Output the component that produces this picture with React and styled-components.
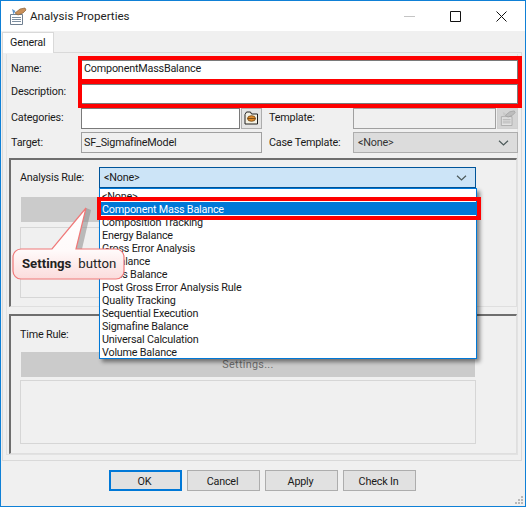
import React from 'react';
import styled, { createGlobalStyle } from 'styled-components';

const GlobalStyle = createGlobalStyle`
  html, body {
    margin: 0;
    padding: 0;
    background: #f0f0f0;
  }
  * {
    box-sizing: border-box;
  }
`;

const Window = styled.div`
  position: relative;
  width: 526px;
  height: 507px;
  overflow: hidden;
  border: 1px solid #0f80d6;
  background: #f0f0f0;
  color: #1a1a1a;
  font-family: Roboto, 'Liberation Sans', sans-serif;
  font-size: 10.8px;
  letter-spacing: -0.2px;
  line-height: 13px;
`;

const TitleBar = styled.div`
  display: flex;
  align-items: center;
  height: 30px;
  padding-left: 8px;
  background: #fff;
`;

const Title = styled.span`
  margin-left: 3px;
  font-size: 11.6px;
  letter-spacing: 0;
  color: #222;
`;

const WindowButtons = styled.div`
  display: flex;
  align-items: center;
  gap: 35px;
  margin-left: auto;
  padding-right: 18px;
`;

const TabStrip = styled.div`
  display: flex;
  height: 21px;
  padding: 1px 0 0 1px;
`;

const Tab = styled.div`
  position: relative;
  z-index: 1;
  width: 52px;
  height: 21px;
  padding: 3px 0 0 7px;
  background: #fff;
  border: 1px solid #d9d9d9;
  border-bottom: none;
`;

const Page = styled.div`
  height: 409px;
  margin: 0 3px 0 1px;
  padding: 1px 3px 5px 3px;
  border: 1px solid #d9d9d9;
`;

const Panel = styled.div`
  height: 100%;
  padding: 6px 0 0 4px;
  border: 1px solid #e2e2e2;
  border-top: none;
`;

const FormGrid = styled.div`
  display: grid;
  grid-template-columns: 70px 181px 7px 84px 165px;
  grid-template-rows: 20px 20px 20px 21px;
  row-gap: 4px;
  align-items: center;
`;

const Label = styled.label`
  grid-column: ${p => p.$col || 'auto'};
  margin-bottom: ${p => p.$lift || 0}px;
`;

const Input = styled.div`
  grid-column: ${p => p.$span || 'auto'};
  height: ${p => p.$height || 21}px;
  padding: ${p => p.$pad ?? 3}px 0 0 2px;
  border: 1px solid ${p => (p.$disabled ? '#a0a0a0' : '#7a7a7a')};
  background: ${p => (p.$disabled ? '#f0f0f0' : '#fff')};
`;

const InputWithButton = styled.div`
  display: grid;
  grid-column: ${p => p.$col || 'auto'};
  grid-template-columns: 1fr 21px;
  column-gap: 1px;
`;

const IconButton = styled.div`
  display: flex;
  align-items: center;
  justify-content: center;
  height: 21px;
  border: 1px solid ${p => (p.$disabled ? '#cfcfcf' : '#adadad')};
  background: ${p => (p.$disabled ? '#d4d4d4' : '#e4e4e4')};
`;

const DisabledSelect = styled.div`
  display: flex;
  align-items: center;
  justify-content: space-between;
  grid-column: ${p => p.$col || 'auto'};
  height: 21px;
  padding: 0 8px 0 4px;
  border: 1px solid #adadad;
  background: #dcdcdc;
  color: #333;
`;

const Group = styled.div`
  display: flex;
  flex-direction: column;
  height: ${p => p.$height}px;
  margin: ${p => p.$top}px 0 0 -2px;
  padding: 7px 40px 0 9px;
  border-style: solid;
  border-width: 2px 1px 1px 2px;
  border-color: #6e6e6e #dfdfdf #dfdfdf #6e6e6e;
`;

const RuleRow = styled.div`
  display: flex;
  align-items: center;
  flex: none;
  height: 21px;
`;

const RuleLabel = styled.span`
  width: 79px;
  padding-top: ${p => p.$drop || 0}px;
`;

const RuleSelect = styled.div`
  display: flex;
  align-items: center;
  justify-content: space-between;
  flex: 1;
  height: 21px;
  padding: 0 8px 0 4px;
  border: 1px solid #005499;
  background: #cce4f7;
`;

const SettingsButton = styled.div`
  display: flex;
  align-items: center;
  justify-content: center;
  flex: none;
  height: 25px;
  margin: ${p => p.$top}px 1px 0;
  background: #cbcbcb;
  color: #6d6d6d;
  letter-spacing: 0.3px;
`;

const SettingsBox = styled.div`
  flex: none;
  height: ${p => p.$height}px;
  margin-top: ${p => p.$top}px;
  border: 1px solid #d6d6d6;
`;

const Footer = styled.div`
  display: flex;
  justify-content: center;
  gap: 5px;
  padding: 9px 1px 0 0;
`;

const FooterButton = styled.div`
  display: flex;
  align-items: center;
  justify-content: center;
  width: 73px;
  height: 21px;
  padding: 1px 2px 0 0;
  border: ${p => (p.$primary ? '2px solid #0078d7' : '1px solid #adadad')};
  background: #e1e1e1;
`;

const Grip = styled.svg`
  position: absolute;
  right: 1px;
  bottom: 1px;
`;

const Dropdown = styled.ul`
  position: absolute;
  z-index: 2;
  left: 98px;
  top: 187px;
  width: 378px;
  height: 171px;
  margin: 0;
  padding: 0;
  list-style: none;
  border: 1px solid #0078d7;
  background: #fff;
  box-shadow: 3px 3px 4px rgba(0, 0, 0, 0.45);
`;

const DropdownItem = styled.li`
  height: 13px;
  padding-left: 2px;
  line-height: 15px;
  white-space: nowrap;
  background: ${p => (p.$active ? '#0078d7' : 'transparent')};
  color: ${p => (p.$active ? '#fff' : '#1a1a1a')};
`;

const RedFrame = styled.div`
  position: absolute;
  z-index: 3;
  left: ${p => p.$x - 1}px;
  top: ${p => p.$y - 1}px;
  width: ${p => p.$w}px;
  height: ${p => p.$h}px;
  border: 4px solid #fe0000;
`;

const Callout = styled.div`
  position: absolute;
  z-index: 4;
  left: 11px;
  top: 205px;
  width: 118px;
  height: 80px;
`;

const CalloutText = styled.div`
  position: absolute;
  left: 10px;
  top: 50px;
  display: flex;
  gap: 7px;
  font-size: 13.2px;
  letter-spacing: 0;
  line-height: 16px;
  color: #222;
  white-space: nowrap;
  b {
    font-weight: 700;
  }
`;

const Chevron = () => (
  <svg width="11" height="6" viewBox="0 0 11 6" fill="none" stroke="#4d5a5a" strokeWidth="1.2">
    <path d="M1 .8 5.5 5 10 .8" />
  </svg>
);

const DocIcon = ({ muted, size = 18 }) => (
  <svg width={size} height={size} viewBox="0 0 18 18">
    <path d="M1.500 7.500h12v10h-12z" fill={muted ? '#e4e4e4' : '#fff'} stroke={muted ? '#a8a8a8' : '#6f7f90'} />
    <path d="M3 10.500h9M3 12.500h9M3 14.500h9" stroke={muted ? '#b0b0b0' : '#7c8ea0'} />
    <path d="M6 6 11 2l5-1 1 2-3 3-5 2z" fill={muted ? '#bdbdbd' : '#c9905a'} stroke={muted ? '#9a9a9a' : '#8a6236'} strokeWidth=".7" />
    <path d="M3 2l3.500 2-2 3.500z" fill={muted ? '#c8c8c8' : '#5f93c7'} />
  </svg>
);

const FolderIcon = () => (
  <svg width="15" height="14" viewBox="0 0 15 14">
    <path d="M1 3.500 2.500 1h4l1 2h6v10H1z" fill="#f4f1e4" stroke="#222" />
    <ellipse cx="7.500" cy="7.500" rx="4" ry="2.800" fill="#e08a2a" stroke="#6a4210" strokeWidth=".8" />
    <path d="M3.500 7.500h8" stroke="#6a4210" strokeWidth=".8" />
  </svg>
);

const rules = [
  '<None>',
  'Component Mass Balance',
  'Composition Tracking',
  'Energy Balance',
  'Gross Error Analysis',
  'In Balance',
  'Mass Balance',
  'Post Gross Error Analysis Rule',
  'Quality Tracking',
  'Sequential Execution',
  'Sigmafine Balance',
  'Universal Calculation',
  'Volume Balance',
];

const App = () => (
  <Window>
    <GlobalStyle />
    <TitleBar>
      <DocIcon />
      <Title>Analysis Properties</Title>
      <WindowButtons>
        <svg width="11" height="11" viewBox="0 0 11 11" stroke="#c4c4c4" fill="none">
          <path d="M0 5.500h11" />
        </svg>
        <svg width="11" height="11" viewBox="0 0 11 11" stroke="#111" fill="none">
          <path d="M.5.500h10v10H.5z" />
        </svg>
        <svg width="11" height="11" viewBox="0 0 11 11" stroke="#111" fill="none">
          <path d="M.5.500l10 10M10.500.500l-10 10" />
        </svg>
      </WindowButtons>
    </TitleBar>

    <TabStrip>
      <Tab>General</Tab>
    </TabStrip>

    <Page>
      <Panel>
        <FormGrid>
          <Label $lift={4}>Name:</Label>
          <Input $span="2 / 6" $height={20} $pad={1}>ComponentMassBalance</Input>
          <Label $lift={6}>Description:</Label>
          <Input $span="2 / 6" $height={20} />
          <Label $lift={2}>Categories:</Label>
          <InputWithButton>
            <Input />
            <IconButton><FolderIcon /></IconButton>
          </InputWithButton>
          <Label $col="4" $lift={2}>Template:</Label>
          <InputWithButton>
            <Input $disabled />
            <IconButton $disabled><DocIcon muted size={16} /></IconButton>
          </InputWithButton>
          <Label>Target:</Label>
          <Input $disabled $span="2">SF_SigmafineModel</Input>
          <Label $col="4">Case Template:</Label>
          <DisabledSelect>
            &lt;None&gt;
            <Chevron />
          </DisabledSelect>
        </FormGrid>

        <Group $top={5} $height={149}>
          <RuleRow>
            <RuleLabel>Analysis Rule:</RuleLabel>
            <RuleSelect>
              &lt;None&gt;
              <Chevron />
            </RuleSelect>
          </RuleRow>
          <SettingsButton $top={9} />
          <SettingsBox $top={5} $height={71} />
        </Group>

        <Group $top={7} $height={140}>
          <RuleRow>
            <RuleLabel $drop={2}>Time Rule:</RuleLabel>
            <RuleSelect />
          </RuleRow>
          <SettingsButton $top={8}>Settings...</SettingsButton>
          <SettingsBox $top={3} $height={64} />
        </Group>
      </Panel>
    </Page>

    <Footer>
      <FooterButton $primary>OK</FooterButton>
      <FooterButton>Cancel</FooterButton>
      <FooterButton>Apply</FooterButton>
      <FooterButton>Check In</FooterButton>
    </Footer>

    <Grip width="9" height="9" viewBox="0 0 9 9" fill="#b8b8b8">
      <path d="M6 0h2v2H6zM3 3h2v2H3zM6 3h2v2H6zM0 6h2v2H0zM3 6h2v2H3zM6 6h2v2H6z" />
    </Grip>

    <Dropdown>
      {rules.map((rule, idx) => (
        <DropdownItem key={idx} $active={idx === 1}>{rule}</DropdownItem>
      ))}
    </Dropdown>

    <RedFrame $x={78} $y={56} $w={444} $h={28} />
    <RedFrame $x={78} $y={79} $w={444} $h={29} />
    <RedFrame $x={97} $y={197} $w={384} $h={23} />

    <Callout>
      <svg width="118" height="80" viewBox="0 0 118 80">
        <defs>
          <linearGradient id="calloutFill" x1="0" y1="0" x2="0" y2="1">
            <stop offset="0" stopColor="#ffffff" />
            <stop offset="0.6" stopColor="#fffafa" />
            <stop offset="1" stopColor="#fbdcdc" />
          </linearGradient>
        </defs>
        <path d="M74 2 79 4 70 43H63z" fill="#8c8c8c" opacity=".55" />
        <path
          d="M9 43H40L74 2 64 43H104a8 8 0 0 1 8 8V65a8 8 0 0 1-8 8H9a8 8 0 0 1-8-8V51a8 8 0 0 1 8-8z"
          fill="url(#calloutFill)"
          stroke="#f07878"
          strokeWidth="1.2"
        />
      </svg>
      <CalloutText>
        <b>Settings</b>
        <span>button</span>
      </CalloutText>
    </Callout>
  </Window>
);

export default App;
